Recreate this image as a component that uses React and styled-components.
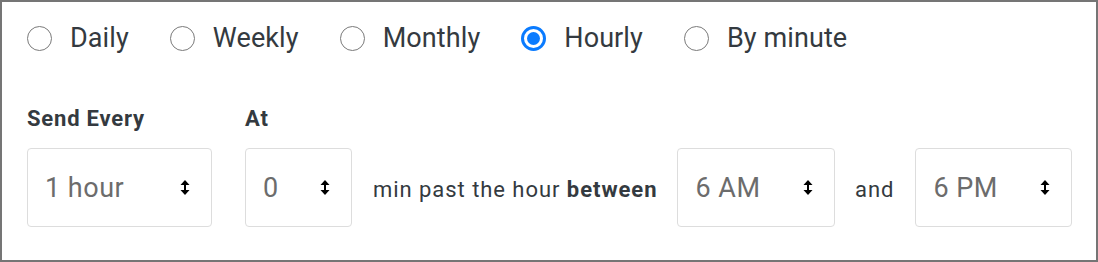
import React from 'react';
import styled, { createGlobalStyle } from 'styled-components';

const GlobalStyle = createGlobalStyle`
  html, body {
    margin: 0;
    padding: 0;
    background: #fff;
  }
  body {
    font-family: Roboto, "Liberation Sans", Arial, sans-serif;
    color: #343a40;
  }
`;

const Frame = styled.div`
  width: 1098px;
  height: 262px;
  box-sizing: border-box;
  border: 2px solid #757575;
  padding: 16px 24px 0 25px;
`;

const RadioRow = styled.div`
  display: flex;
  align-items: center;
  height: 40px;
  gap: 41px;
`;

const RadioItem = styled.label`
  display: flex;
  align-items: center;
  gap: 18px;
  font-size: 27px;
  letter-spacing: 0.1px;
  color: #343a40;
  cursor: pointer;
`;

const RadioDot = styled.span`
  box-sizing: border-box;
  width: 25px;
  height: 25px;
  border-radius: 50%;
  border: ${props => (props.checked ? '3px solid #0a7bff' : '1.5px solid #7a7a7a')};
  display: flex;
  align-items: center;
  justify-content: center;
  &::after {
    content: '';
    display: ${props => (props.checked ? 'block' : 'none')};
    width: 13px;
    height: 13px;
    border-radius: 50%;
    background: #0a7bff;
  }
`;

const FieldsRow = styled.div`
  display: flex;
  align-items: flex-end;
  margin-top: 48px;
`;

const Field = styled.div`
  display: flex;
  flex-direction: column;
  gap: 17px;
  margin-right: ${props => props.gap || 0}px;
`;

const FieldLabel = styled.div`
  font-size: 22px;
  line-height: 25px;
  font-weight: 700;
  letter-spacing: 0.8px;
  color: #343a40;
`;

const SelectBox = styled.div`
  box-sizing: border-box;
  width: ${props => props.width}px;
  height: 79px;
  border: 1.5px solid #dddddd;
  border-radius: 4px;
  display: flex;
  align-items: center;
  justify-content: space-between;
  padding: 0 21px 0 17px;
  font-size: 27px;
  letter-spacing: 0.5px;
  color: #6c6c6c;
  margin-right: ${props => props.gap || 0}px;
`;

const InlineText = styled.div`
  height: 79px;
  display: flex;
  align-items: center;
  padding-top: 4px;
  box-sizing: border-box;
  font-size: 22px;
  letter-spacing: 0.95px;
  color: #343a40;
  margin-right: ${props => props.gap || 0}px;
  white-space: pre;
  b {
    font-weight: 700;
  }
`;

const SortArrows = () => (
  <svg width="10" height="15" viewBox="0 0 10 15">
    <path d="M5 0 L9.5 5 L0.5 5 Z" fill="#000" />
    <rect x="4" y="4" width="2" height="7" fill="#000" />
    <path d="M5 15 L9.5 10 L0.5 10 Z" fill="#000" />
  </svg>
);

const Select = ({ value, width, gap }) => (
  <SelectBox width={width} gap={gap}>
    <span>{value}</span>
    <SortArrows />
  </SelectBox>
);

const options = ['Daily', 'Weekly', 'Monthly', 'Hourly', 'By minute'];

export default function App() {
  const selected = 'Hourly';
  return (
    <>
      <GlobalStyle />
      <Frame>
        <RadioRow>
          {options.map(opt => (
            <RadioItem key={opt}>
              <RadioDot checked={opt === selected} />
              {opt}
            </RadioItem>
          ))}
        </RadioRow>
        <FieldsRow>
          <Field gap={33}>
            <FieldLabel>Send Every</FieldLabel>
            <Select value="1 hour" width={185} />
          </Field>
          <Field gap={21}>
            <FieldLabel>At</FieldLabel>
            <Select value="0" width={107} />
          </Field>
          <InlineText gap={20}>
            min past the hour <b>between</b>
          </InlineText>
          <Select value="6 AM" width={158} gap={20} />
          <InlineText gap={21}>and</InlineText>
          <Select value="6 PM" width={157} />
        </FieldsRow>
      </Frame>
    </>
  );
}
